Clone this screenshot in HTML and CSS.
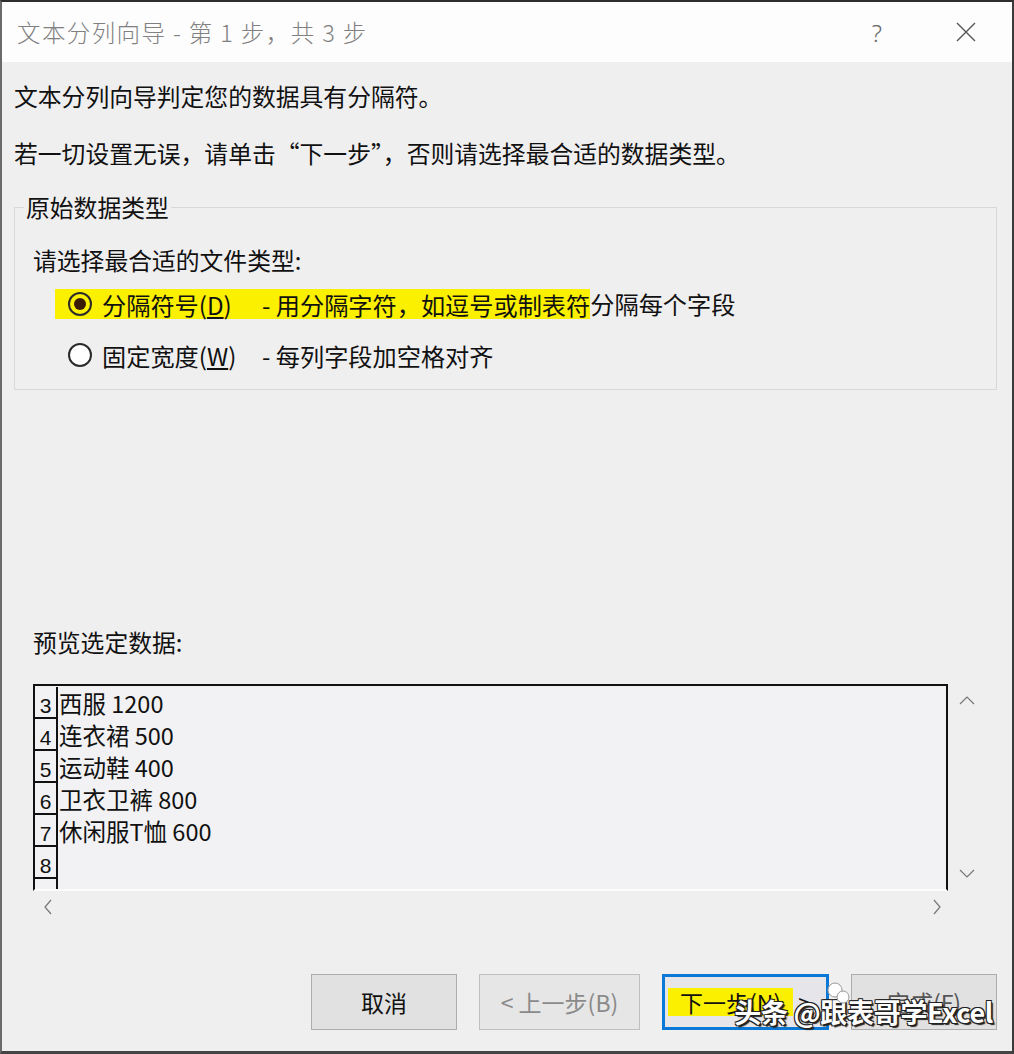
FILE: index.html
```html
<!DOCTYPE html>
<html lang="zh-CN">
<head>
<meta charset="utf-8">
<title>文本分列向导</title>
<link rel="stylesheet" href="styles.css">
</head>
<body>
<div class="window">
  <div class="titlebar">
    <div class="title">文本分列向导 - 第 1 步，共 3 步</div>
    <div class="title-btns">
      <span class="help">?</span>
      <svg class="close" width="20" height="20" viewBox="0 0 20 20"><path d="M1 1L19 19M19 1L1 19" stroke="#555" stroke-width="1.4" fill="none"/></svg>
    </div>
  </div>
  <div class="body">
    <p class="line l1">文本分列向导判定您的数据具有分隔符。</p>
    <p class="line l2">若一切设置无误，请单击“下一步”，否则请选择最合适的数据类型。</p>
    <fieldset class="group">
      <legend class="legend">原始数据类型</legend>
      <div class="line label">请选择最合适的文件类型:</div>
      <div class="radio-row r1">
        <span class="hl"><span class="radio on"></span><span class="opt">分隔符号(<u>D</u>)</span><span class="desc">- 用分隔字符，如逗号或制表符</span></span><span class="desc2">分隔每个字段</span>
      </div>
      <div class="radio-row r2">
        <span class="plain"><span class="radio"></span><span class="opt">固定宽度(<u>W</u>)</span><span class="desc">- 每列字段加空格对齐</span></span>
      </div>
    </fieldset>
    <div class="line preview-label">预览选定数据:</div>
    <div class="preview-wrap">
      <div class="preview">
        <div class="row"><span class="num">3</span><span class="cell">西服 1200</span></div>
        <div class="row"><span class="num">4</span><span class="cell">连衣裙 500</span></div>
        <div class="row"><span class="num">5</span><span class="cell">运动鞋 400</span></div>
        <div class="row"><span class="num">6</span><span class="cell">卫衣卫裤 800</span></div>
        <div class="row"><span class="num">7</span><span class="cell">休闲服T恤 600</span></div>
        <div class="row"><span class="num">8</span><span class="cell"></span></div>
        <div class="row"><span class="num"></span><span class="cell"></span></div>
      </div>
      <div class="vscroll">
        <svg width="16" height="10" viewBox="0 0 16 10"><path d="M1 9L8 2L15 9" stroke="#777" stroke-width="1.2" fill="none"/></svg>
        <svg width="16" height="10" viewBox="0 0 16 10"><path d="M1 1L8 8L15 1" stroke="#777" stroke-width="1.2" fill="none"/></svg>
      </div>
    </div>
    <div class="hscroll">
      <svg width="10" height="16" viewBox="0 0 10 16"><path d="M8 1L2 8L8 15" stroke="#777" stroke-width="1.2" fill="none"/></svg>
      <svg width="10" height="16" viewBox="0 0 10 16"><path d="M2 1L8 8L2 15" stroke="#777" stroke-width="1.2" fill="none"/></svg>
    </div>
    <div class="buttons">
      <div class="btn cancel">取消</div>
      <div class="btn back disabled">&lt; 上一步(B)</div>
      <div class="btn next"><span class="hl2">下一步(N)</span>&nbsp;&gt;</div>
      <div class="btn finish">完成(F)</div>
      <div class="watermark">
        <svg class="wm-logo" width="24" height="22" viewBox="0 0 24 22"><circle cx="9" cy="8" r="7" fill="#fff" stroke="#999" stroke-width="1"/><circle cx="17" cy="15" r="6" fill="#fff" stroke="#999" stroke-width="1"/></svg>
        <span class="wm-text">头条 @跟表哥学Excel</span>
      </div>
    </div>
  </div>
</div>
</body>
</html>
```
FILE: styles.css
```css
* { box-sizing: border-box; }
html, body { margin: 0; padding: 0; }
body {
  width: 1014px;
  height: 1054px;
  overflow: hidden;
  background: #3a3a3a;
  font-family: "Noto Sans CJK SC", "Noto Sans", sans-serif;
}
.window {
  width: 1014px;
  height: 1054px;
  border-top: 2px solid #2e2e2e;
  border-left: 2px solid #6a6a6a;
  border-right: 2px solid #3a3a3a;
  border-bottom: 3px solid #444;
  background: #f0eff0;
  display: flex;
  flex-direction: column;
}
.titlebar {
  height: 60px;
  background: #fdfdfd;
  display: flex;
  align-items: center;
  justify-content: space-between;
  padding: 0 36px 0 15px;
  flex: none;
}
.title {
  font-size: 23.5px;
  color: #808080;
  font-weight: 300;
  letter-spacing: 1.4px;
}
.title-btns { display: flex; align-items: center; gap: 74px; }
.help { font-size: 24px; color: #666; font-weight: 300; font-family: "Noto Sans", sans-serif; }
.close { display: block; }
.body {
  flex: 1;
  padding: 0 15px 0 12px;
  display: flex;
  flex-direction: column;
  position: relative;
}
.line {
  font-size: 23.8px;
  line-height: 32px;
  color: #111;
  margin: 0;
}
.l1 { margin-top: 18px; }
.l2 { margin-top: 25px; }
.group {
  margin: 22px 0 0 0;
  padding: 0 0 18px 0;
  border: 1px solid #d8d8d8;
  min-width: 0;
}
.legend {
  font-size: 23.8px;
  line-height: 32px;
  color: #111;
  margin-left: 9px;
  padding: 0 2px;
}
.label { margin-top: 21px; margin-left: 18px; }
.radio-row {
  display: flex;
  align-items: center;
  height: 32px;
  font-size: 24.2px;
  color: #111;
}
.r1 { margin-top: 12px; margin-left: 40px; }
.r2 { margin-top: 19px; margin-left: 40px; }
.hl, .plain {
  display: flex;
  align-items: center;
  height: 30px;
  padding-left: 13px;
}
.hl { background: #fbf000; }
.radio {
  width: 24px;
  height: 24px;
  border-radius: 50%;
  border: 2px solid #2b2b2b;
  background: #fff;
  display: flex;
  align-items: center;
  justify-content: center;
  flex: none;
}
.hl .radio { background: transparent; }
.radio.on::after {
  content: "";
  width: 12px;
  height: 12px;
  border-radius: 50%;
  background: #3a1a00;
}
.opt { margin-left: 10px; width: 160px; }
.desc2 { height: 30px; line-height: 30px; }
.preview-label { margin-top: 236px; margin-left: 19px; }
.preview-wrap {
  margin-top: 26px;
  margin-left: 19px;
  display: flex;
  height: 207px;
}
.preview {
  width: 915px;
  height: 207px;
  border: 2px solid #111;
  border-bottom: 2px solid #fbfbfb;
  background: #f2f1f3;
  overflow: hidden;
  padding-top: 1px;
}
.row {
  display: flex;
  height: 32px;
}
.num {
  width: 23px;
  flex: none;
  border-right: 2px solid #111;
  border-bottom: 2px solid #111;
  font-family: "Liberation Sans", sans-serif;
  font-size: 21px;
  line-height: 38px;
  text-align: center;
  color: #111;
  overflow: hidden;
}
.cell {
  font-size: 23.5px;
  line-height: 32px;
  color: #111;
  padding-left: 1px;
  white-space: pre;
}
.vscroll {
  width: 37px;
  display: flex;
  flex-direction: column;
  align-items: center;
  justify-content: space-between;
  padding: 11px 0 12px 0;
}
.vscroll svg { display: block; }
.hscroll {
  margin-left: 28px;
  width: 900px;
  height: 32px;
  display: flex;
  align-items: center;
  justify-content: space-between;
  padding: 0 0 0 1px;
}
.buttons {
  margin-top: 51px;
  display: flex;
  justify-content: flex-end;
  gap: 22px;
  position: relative;
}
.btn {
  height: 56px;
  background: #e1e1e1;
  border: 1px solid #adadad;
  display: flex;
  align-items: center;
  justify-content: center;
  font-size: 23px;
  color: #111;
}
.cancel { width: 146px; }
.back { width: 161px; background: #e6e6e6; border-color: #bfbfbf; color: #8a8a8a; }
.next { width: 167px; border: 3px solid #0a78d6; background: #e6e6ea; justify-content: flex-start; padding-left: 3px; }
.hl2 { background: #fbf000; padding: 0 12px 0 12px; height: 28px; line-height: 28px; }
.finish { width: 146px; color: #555; }
.watermark {
  position: absolute;
  right: 4px;
  top: 18px;
  display: flex;
  align-items: center;
}
.wm-logo { position: absolute; left: 92px; top: -10px; }
.wm-text {
  font-size: 27px;
  font-weight: 700;
  color: #fff;
  text-shadow: -1px -1px 0 #222, 1px -1px 0 #222, -1px 1px 0 #222, 1px 1px 0 #222, 2px 2px 1px #222;
  letter-spacing: -0.3px;
}
```
